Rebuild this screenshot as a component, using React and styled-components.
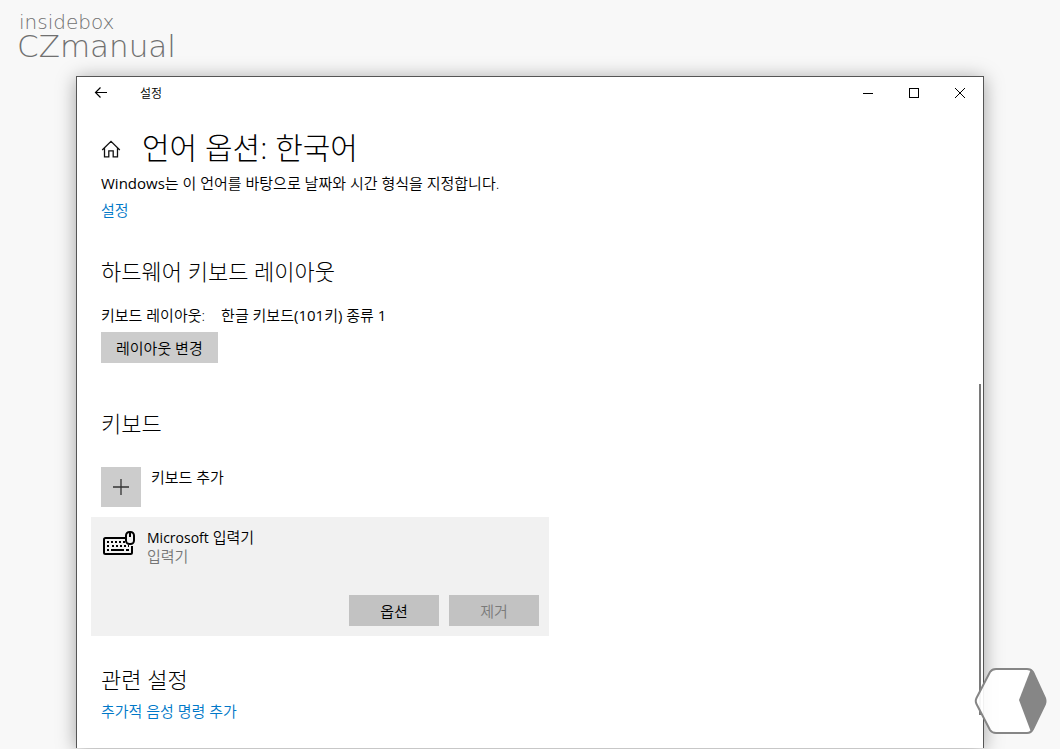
import React from "react";
import styled, { createGlobalStyle } from "styled-components";

const GlobalStyle = createGlobalStyle`
  * {
    box-sizing: border-box;
  }
  body {
    margin: 0;
    background: #f8f8f8;
    color: #000;
    font-family: "Open Sans", "Noto Sans CJK KR", sans-serif;
    font-size: 15px;
    font-weight: 350;
    line-height: 20px;
  }
  h1, h2, p {
    margin: 0;
  }
`;

const Page = styled.div`
  position: relative;
  display: flex;
  flex-direction: column;
  min-height: 100vh;
  padding-bottom: 1px;
  overflow: hidden;
`;
const Brand = styled.header`
  height: 76px;
  padding: 12px 17px 0;
  color: #707070;
  font-family: "DejaVu Sans", sans-serif;
  font-weight: 200;
`;
const BrandSmall = styled.div`
  padding-left: 2px;
  font-size: 20px;
  line-height: 20px;
`;
const BrandName = styled.div`
  font-size: 31px;
  line-height: 28px;
`;

const Window = styled.main`
  position: relative;
  flex: 1;
  margin: 0 76px;
  background: #fff;
  border: 1px solid #555;
  border-bottom: 0;
  box-shadow: 0 2px 18px rgba(0, 0, 0, 0.35);
`;
const TitleBar = styled.div`
  display: flex;
  align-items: center;
  height: 32px;
  font-size: 12px;
`;
const WindowTitle = styled.span`
  flex: 1;
  padding: 2px 0 0 15px;
`;
const BarButton = styled.button`
  display: flex;
  align-items: center;
  justify-content: center;
  width: ${(props) => (props.$wide ? 48 : 46)}px;
  height: 32px;
  padding: 0;
  border: 0;
  background: none;
  color: #000;
`;
const Content = styled.div`
  padding: 19px 24px 24px;
`;
const Heading = styled.div`
  display: flex;
  align-items: center;
  gap: 21px;
  margin-bottom: 5px;
`;
const Title = styled.h1`
  font-size: 30px;
  font-weight: 300;
  line-height: 40px;
`;
const Section = styled.section`
  margin-top: ${(props) => props.$space}px;
`;
const SectionTitle = styled.h2`
  margin-bottom: ${(props) => props.$gap}px;
  font-size: 22px;
  font-weight: 300;
  line-height: 28px;
`;
const Link = styled.a`
  display: table;
  color: #0078c8;
  text-decoration: none;
`;
const Description = styled.p`
  margin-bottom: 7px;
`;
const LayoutRow = styled.p`
  display: flex;
  gap: 16px;
  margin-bottom: 7px;
`;
const Button = styled.button`
  height: 31px;
  min-width: 90px;
  padding: 0 15px;
  border: 0;
  background: ${(props) => (props.$dark ? "#c2c2c2" : "#ccc")};
  color: #000;
  font: inherit;
  &:disabled {
    color: #7a7a7a;
  }
`;
const AddKeyboard = styled.button`
  display: flex;
  gap: 10px;
  padding: 0;
  border: 0;
  background: none;
  color: #000;
  font: inherit;
`;
const AddIcon = styled.span`
  display: flex;
  align-items: center;
  justify-content: center;
  width: 40px;
  height: 40px;
  background: #ccc;
`;
const Card = styled.div`
  max-width: 458px;
  margin: 10px 0 0 -10px;
  padding: 11px 10px 10px;
  background: #f1f1f1;
`;
const CardHead = styled.div`
  display: flex;
  gap: 11px;
  line-height: 19px;
`;
const Latin = styled.span`
  font-size: ${(props) => (props.$small ? 14 : 15)}px;
  font-weight: 400;
  line-height: 1;
`;
const Muted = styled.div`
  color: #757575;
`;
const Actions = styled.div`
  display: flex;
  justify-content: flex-end;
  gap: 10px;
  margin-top: 29px;
`;
const ScrollThumb = styled.div`
  position: absolute;
  top: 307px;
  right: 2px;
  width: 2px;
  height: 331px;
  background: #7a7a7a;
`;
const Watermark = styled.svg`
  position: absolute;
  right: 12px;
  bottom: 14px;
`;

function BackIcon() {
  return (
    <svg width="14" height="12" viewBox="0 0 14 12" fill="none" stroke="currentColor" strokeWidth="1.2">
      <path d="M13 5.500H1.500M6.500 .5l-5 5 5 5" />
    </svg>
  );
}

function HomeIcon() {
  return (
    <svg width="20" height="20" viewBox="0 0 20 20" fill="none" stroke="#111" strokeWidth="1.3">
      <path d="M1.2 12L10 3.300 18.800 12M3.500 10v8.800h4.300v-6h4.400v6h4.300V10" />
    </svg>
  );
}

function KeyboardIcon() {
  return (
    <svg width="35" height="29" viewBox="0 -1 35 29" fill="none" stroke="#000" strokeWidth="2">
      <path d="M24 9H4.500Q3 9 3 10.500V23.500Q3 25 4.500 25H29.500Q31 25 31 23.500V17" />
      <path d="M6 13h2m2 0h2m2 0h2m2 0h2m2 0h2M6 17h2m3 0h2m2 0h2m2 0h2m2 0h2m2 0h1M6 21h2m2 0h13m2 0h3" />
      <rect x="25" y="3" width="8" height="12" rx="3.500" fill="#f1f1f1" />
      <path d="M29 3v5" />
    </svg>
  );
}

export default function App() {
  return (
    <>
      <GlobalStyle />
      <Page>
        <Brand>
          <BrandSmall>insidebox</BrandSmall>
          <BrandName>CZmanual</BrandName>
        </Brand>
        <Window>
          <TitleBar>
            <BarButton $wide aria-label="뒤로">
              <BackIcon />
            </BarButton>
            <WindowTitle>설정</WindowTitle>
            <BarButton aria-label="최소화">
              <svg width="10" height="11" stroke="currentColor">
                <path d="M0 5.500h10" />
              </svg>
            </BarButton>
            <BarButton aria-label="최대화">
              <svg width="10" height="10" fill="none" stroke="currentColor">
                <rect x="0.500" y="0.500" width="9" height="9" />
              </svg>
            </BarButton>
            <BarButton aria-label="닫기">
              <svg width="10" height="10" stroke="currentColor">
                <path d="M0 0l10 10M10 0L0 10" />
              </svg>
            </BarButton>
          </TitleBar>
          <Content>
            <Heading>
              <HomeIcon />
              <Title>언어 옵션: 한국어</Title>
            </Heading>
            <Description>
              <Latin>Windows</Latin>는 이 언어를 바탕으로 날짜와 시간 형식을 지정합니다.
            </Description>
            <Link href="#format">설정</Link>

            <Section $space={37}>
              <SectionTitle $gap={20}>하드웨어 키보드 레이아웃</SectionTitle>
              <LayoutRow>
                <span>키보드 레이아웃:</span>
                <span>
                  한글 키보드<Latin>(101</Latin>키<Latin>)</Latin> 종류 <Latin>1</Latin>
                </span>
              </LayoutRow>
              <Button>레이아웃 변경</Button>
            </Section>

            <Section $space={46}>
              <SectionTitle $gap={30}>키보드</SectionTitle>
              <AddKeyboard>
                <AddIcon>
                  <svg width="16" height="16" stroke="#333" strokeWidth="1.3">
                    <path d="M0 8h16M8 0v16" />
                  </svg>
                </AddIcon>
                <span>키보드 추가</span>
              </AddKeyboard>
              <Card>
                <CardHead>
                  <KeyboardIcon />
                  <div>
                    <div>
                      <Latin $small>Microsoft</Latin> 입력기
                    </div>
                    <Muted>입력기</Muted>
                  </div>
                </CardHead>
                <Actions>
                  <Button $dark>옵션</Button>
                  <Button $dark disabled>
                    제거
                  </Button>
                </Actions>
              </Card>
            </Section>

            <Section $space={29}>
              <SectionTitle $gap={8}>관련 설정</SectionTitle>
              <Link href="#speech">추가적 음성 명령 추가</Link>
            </Section>
          </Content>
          <ScrollThumb />
        </Window>
        <Watermark width="74" height="68" viewBox="0 0 74 68" aria-hidden="true">
          <path
            d="M22 2H53Q57 2 59 5L71 31Q72 34 71 37L59 62Q57 66 53 66H22Q18 66 16 63L2.500 37Q1 34 2.500 31L16 5Q18 2 22 2Z"
            fill="#fff"
            fillOpacity="0.92"
            stroke="#868686"
            strokeWidth="2"
          />
          <path d="M57 2L45 33L57 65L71 37Q72 34 71 31Z" fill="#868686" />
        </Watermark>
      </Page>
    </>
  );
}
